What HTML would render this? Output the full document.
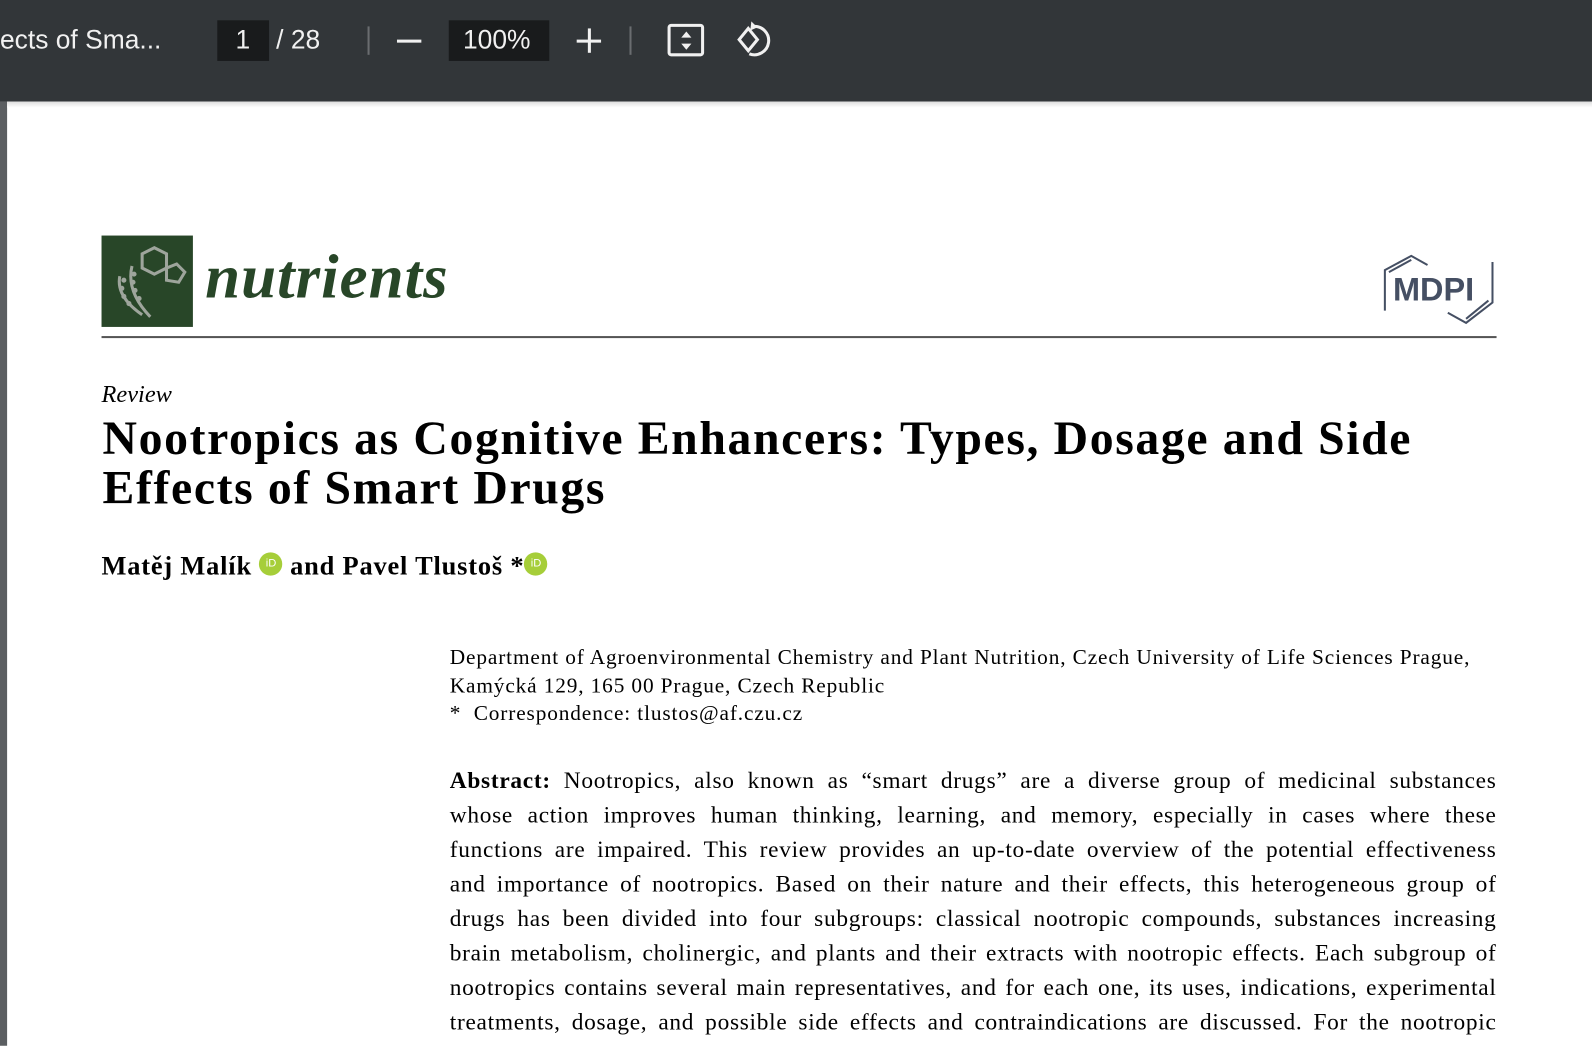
<!DOCTYPE html>
<html><head><meta charset="utf-8"><style>
*{margin:0;padding:0;box-sizing:border-box}
body{width:1592px;height:1030px;overflow:hidden;background:#fff;position:relative;font-family:"Liberation Serif",serif;color:#000}
#w{position:absolute;left:0;top:0;width:1568px;height:1015px;transform:scale(1.0153);transform-origin:0 0}
.tb{position:absolute;left:0;top:0;width:1568px;height:100px;background:#323639;color:#f1f1f1;font-family:"Liberation Sans",sans-serif}
.tb div{position:absolute}
.side{position:absolute;left:0;top:100px;width:7px;height:930px;background:#5b5e61}
.shadow{position:absolute;left:7px;top:100px;width:1561px;height:6px;background:linear-gradient(#ddd,#fff)}
.a{position:absolute}
.just{text-align:justify;text-align-last:justify;white-space:nowrap;width:1031px;left:443px;font-size:23px;letter-spacing:0.7px}
.orc{display:inline-block;width:23px;height:23px;border-radius:50%;background:#a6ce39;color:#fff;font:11px "Liberation Sans",sans-serif;text-align:center;line-height:23px;vertical-align:8px;letter-spacing:0}
</style></head><body><div id="w">
<div class="tb">
<div style="left:0;top:24px;font-size:26px">ects of Sma...</div>
<div style="left:214px;top:20px;width:51px;height:40px;background:#191b1c"></div>
<div style="left:232px;top:24px;font-size:26px">1</div>
<div style="left:272px;top:24px;font-size:26px">/ 28</div>
<div style="left:362px;top:26px;width:2px;height:28px;background:#6a6d70"></div>
<div style="left:391px;top:39px;width:24px;height:3px;background:#f1f1f1"></div>
<div style="left:442px;top:20px;width:99px;height:40px;background:#191b1c"></div>
<div style="left:456px;top:24px;font-size:26px">100%</div>
<div style="left:568px;top:39px;width:24px;height:3px;background:#f1f1f1"></div>
<div style="left:579px;top:28px;width:3px;height:24px;background:#f1f1f1"></div>
<div style="left:620px;top:26px;width:2px;height:28px;background:#6a6d70"></div>
<svg style="position:absolute;left:656px;top:22px" width="40" height="36"><rect x="3" y="3" width="33" height="29" rx="2" fill="none" stroke="#f1f1f1" stroke-width="3"/><path d="M15 15 L20 9 L25 15Z M15 21 L20 27 L25 21Z" fill="#f1f1f1"/></svg>
<svg style="position:absolute;left:718px;top:18px" width="44" height="42"><path d="M19 10 L28 21 L19 32 L10 21Z" fill="none" stroke="#f1f1f1" stroke-width="3"/><path d="M24 8 A14 14 0 1 1 20 35" fill="none" stroke="#f1f1f1" stroke-width="3"/><path d="M22 3 L28 9 L21 12Z" fill="#f1f1f1"/></svg>
</div>
<div class="side"></div><div class="shadow"></div>

<div class="a" style="left:100px;top:232px;width:90px;height:90px;background:#284628"></div>
<svg class="a" style="left:100px;top:232px" width="90" height="90"><g fill="none" stroke="#9ea59c" stroke-width="3"><path d="M40 18 L52 12 L64 18 L64 32 L52 38 L40 32Z"/><path d="M64 32 L74 28 L82 36 L76 46 L64 44Z"/><path d="M30 30 Q24 55 48 80 M18 40 Q14 60 40 78"/></g><g fill="#9ea59c"><circle cx="22" cy="44" r="2.5"/><circle cx="20" cy="52" r="2.5"/><circle cx="22" cy="60" r="2.5"/><circle cx="27" cy="67" r="2.5"/><circle cx="32" cy="38" r="2.5"/><circle cx="31" cy="46" r="2.5"/><circle cx="33" cy="54" r="2.5"/><circle cx="37" cy="62" r="2.5"/></g></svg>
<div class="a" style="left:202px;top:238px;font:italic bold 62px 'Liberation Serif',serif;color:#284628;letter-spacing:1px">nutrients</div>
<svg class="a" style="left:1362px;top:246px" width="112" height="76"><g fill="none" stroke="#454f63" stroke-width="2"><path d="M2 60 V20 L28 6 L44 15"/><path d="M6 22 L28 10"/><path d="M108 12 V52 L82 72 L64 62"/><path d="M104 50 L82 68"/></g><text x="10" y="50" font-family="Liberation Sans" font-weight="bold" font-size="32" fill="#454f63">MDPI</text></svg>
<div class="a" style="left:100px;top:331px;width:1374px;height:2px;background:#555"></div>

<div class="a" style="left:100px;top:376px;font:italic 24px 'Liberation Serif',serif">Review</div>
<div class="a" style="left:101px;top:408px;font-weight:bold;font-size:47px;line-height:49px;letter-spacing:1.6px">Nootropics as Cognitive Enhancers: Types, Dosage and Side<br>Effects of Smart Drugs</div>
<div class="a" style="left:100px;top:543px;font-weight:bold;font-size:26px;letter-spacing:0.8px">Matěj Malík <span class="orc">iD</span> and Pavel Tlustoš *<span class="orc">iD</span></div>

<div class="a" style="left:443px;top:634px;font-size:21px;line-height:27.5px;letter-spacing:0.85px">Department of Agroenvironmental Chemistry and Plant Nutrition, Czech University of Life Sciences Prague,<br>Kamýcká 129, 165 00 Prague, Czech Republic<br>*&nbsp;&nbsp;Correspondence: tlustos@af.czu.cz</div>

<div class="a just" style="top:756px"><b>Abstract:</b> Nootropics, also known as “smart drugs” are a diverse group of medicinal substances</div>
<div class="a just" style="top:790px">whose action improves human thinking, learning, and memory, especially in cases where these</div>
<div class="a just" style="top:824px">functions are impaired. This review provides an up-to-date overview of the potential effectiveness</div>
<div class="a just" style="top:858px">and importance of nootropics. Based on their nature and their effects, this heterogeneous group of</div>
<div class="a just" style="top:892px">drugs has been divided into four subgroups: classical nootropic compounds, substances increasing</div>
<div class="a just" style="top:926px">brain metabolism, cholinergic, and plants and their extracts with nootropic effects. Each subgroup of</div>
<div class="a just" style="top:960px">nootropics contains several main representatives, and for each one, its uses, indications, experimental</div>
<div class="a just" style="top:994px">treatments, dosage, and possible side effects and contraindications are discussed. For the nootropic</div>
</div></body></html>
